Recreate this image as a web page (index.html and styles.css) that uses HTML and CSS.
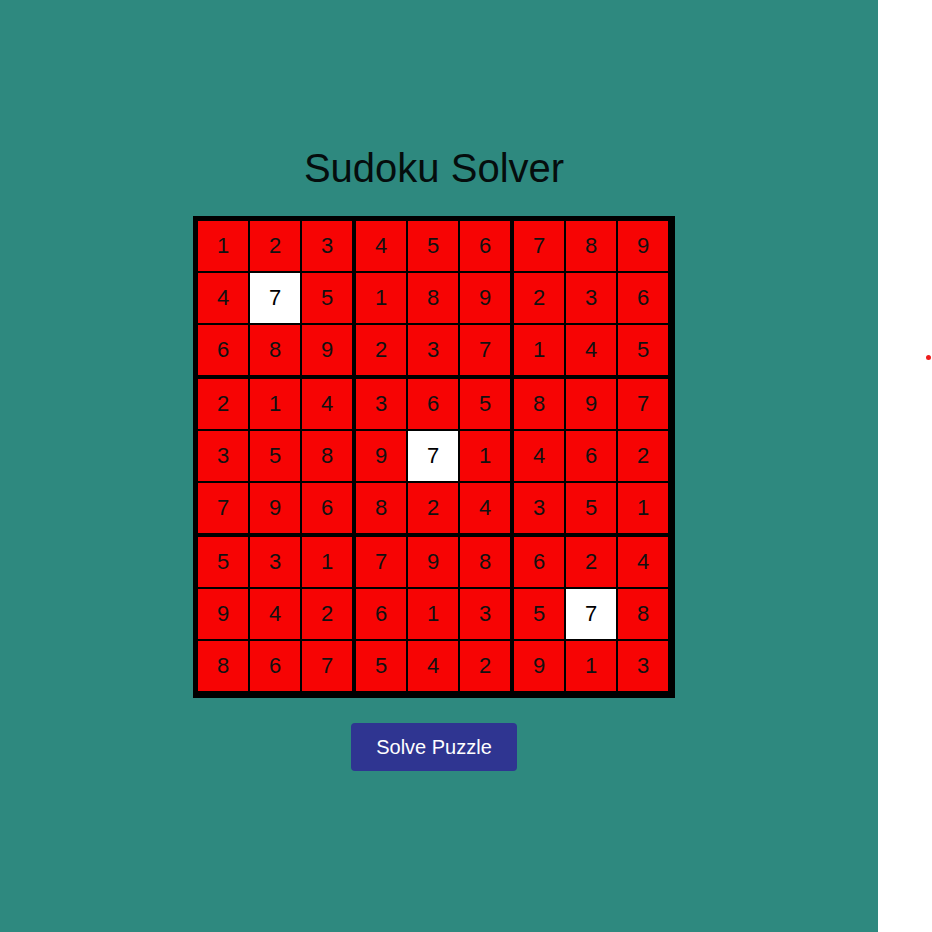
FILE: index.html
```html
<!DOCTYPE html>
<html lang="en">
<head>
<meta charset="utf-8">
<title>Sudoku Solver</title>
<link rel="stylesheet" href="styles.css">
</head>
<body>
<div class="page">
  <main class="app">
    <h1 class="title">Sudoku Solver</h1>
    <div class="board">
      <div class="cell">1</div><div class="cell">2</div><div class="cell br">3</div><div class="cell">4</div><div class="cell">5</div><div class="cell br">6</div><div class="cell">7</div><div class="cell">8</div><div class="cell br">9</div>
      <div class="cell">4</div><div class="cell given">7</div><div class="cell br">5</div><div class="cell">1</div><div class="cell">8</div><div class="cell br">9</div><div class="cell">2</div><div class="cell">3</div><div class="cell br">6</div>
      <div class="cell bb">6</div><div class="cell bb">8</div><div class="cell br bb">9</div><div class="cell bb">2</div><div class="cell bb">3</div><div class="cell br bb">7</div><div class="cell bb">1</div><div class="cell bb">4</div><div class="cell br bb">5</div>
      <div class="cell">2</div><div class="cell">1</div><div class="cell br">4</div><div class="cell">3</div><div class="cell">6</div><div class="cell br">5</div><div class="cell">8</div><div class="cell">9</div><div class="cell br">7</div>
      <div class="cell">3</div><div class="cell">5</div><div class="cell br">8</div><div class="cell">9</div><div class="cell given">7</div><div class="cell br">1</div><div class="cell">4</div><div class="cell">6</div><div class="cell br">2</div>
      <div class="cell bb">7</div><div class="cell bb">9</div><div class="cell br bb">6</div><div class="cell bb">8</div><div class="cell bb">2</div><div class="cell br bb">4</div><div class="cell bb">3</div><div class="cell bb">5</div><div class="cell br bb">1</div>
      <div class="cell">5</div><div class="cell">3</div><div class="cell br">1</div><div class="cell">7</div><div class="cell">9</div><div class="cell br">8</div><div class="cell">6</div><div class="cell">2</div><div class="cell br">4</div>
      <div class="cell">9</div><div class="cell">4</div><div class="cell br">2</div><div class="cell">6</div><div class="cell">1</div><div class="cell br">3</div><div class="cell">5</div><div class="cell given">7</div><div class="cell br">8</div>
      <div class="cell bb">8</div><div class="cell bb">6</div><div class="cell br bb">7</div><div class="cell bb">5</div><div class="cell bb">4</div><div class="cell br bb">2</div><div class="cell bb">9</div><div class="cell bb">1</div><div class="cell br bb">3</div>
    </div>
    <button class="solve" type="button">Solve Puzzle</button>
  </main>
  <aside class="side"><span class="dot"></span></aside>
</div>
</body>
</html>
```

FILE: styles.css
```css
html, body {
  margin: 0;
  padding: 0;
  background: #ffffff;
  font-family: "Liberation Sans", Arial, sans-serif;
}

.page {
  display: flex;
  min-height: 100vh;
}

.app {
  width: 878px;
  min-height: 932px;
  box-sizing: border-box;
  padding: 145px 10px 0 0;
  background: #2e897f;
  display: flex;
  flex-direction: column;
  align-items: center;
}

.title {
  margin: 0 0 25px;
  font-size: 40px;
  line-height: 46px;
  font-weight: normal;
  color: #050d0d;
}

.board {
  display: grid;
  grid-template-columns: repeat(9, auto);
  border: 4px solid #000;
}

.cell {
  width: 50px;
  height: 50px;
  border: 1px solid #000;
  background: #f70404;
  color: #111;
  font-size: 22px;
  display: flex;
  align-items: center;
  justify-content: center;
}

.cell.br {
  border-right-width: 3px;
}

.cell.bb {
  border-bottom-width: 3px;
}

.cell.given {
  background: #ffffff;
  color: #000;
}

.solve {
  margin-top: 25px;
  width: 166px;
  height: 48px;
  border: none;
  border-radius: 4px;
  background: #2f3591;
  color: #ffffff;
  font-family: "Liberation Sans", Arial, sans-serif;
  font-size: 20px;
  padding: 0;
  cursor: pointer;
}

.side {
  flex: 1;
  position: relative;
}

.dot {
  position: absolute;
  left: 48px;
  top: 355px;
  width: 5px;
  height: 5px;
  border-radius: 50%;
  background: #ee1c1c;
}
```
